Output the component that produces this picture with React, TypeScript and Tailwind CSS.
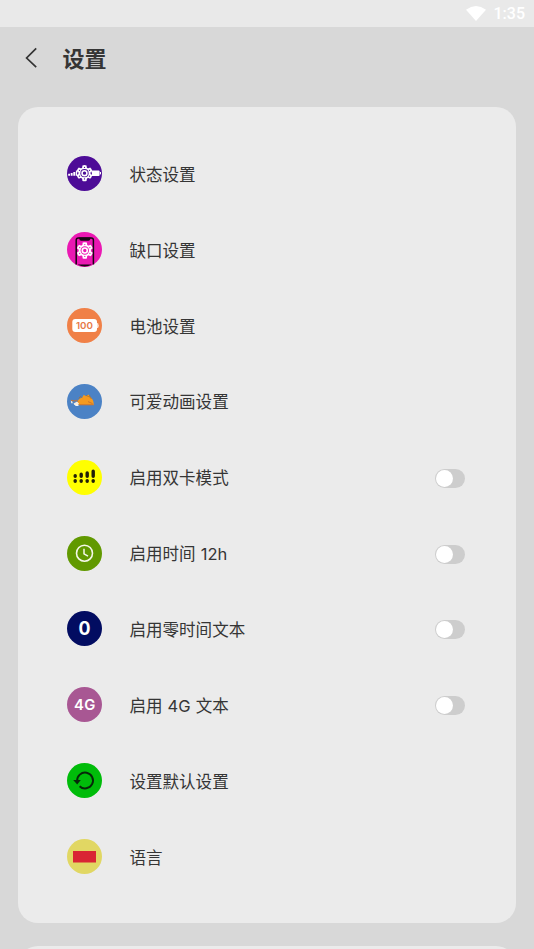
import type { ReactNode } from 'react';

type Item = { label: string; icon: ReactNode; toggle?: boolean };

function Gear({ cx, cy, size, bg }: { cx: number; cy: number; size: number; bg: string }) {
  return (
    <g transform={`translate(${cx} ${cy}) scale(${size})`}>
      {[0, 60, 120, 180, 240, 300].map((a) => (
        <path key={a} d="M-2.6-4-2.1-7.9Q0-8.6 2.1-7.9L2.6-4Z" fill="#fff" transform={`rotate(${a})`} />
      ))}
      <circle r="6.1" fill="#fff" />
      <circle r="4.2" fill={bg} />
      {[0, 60, 120, 180, 240, 300].map((a) => (
        <circle key={a} cy="-5.9" r="0.65" fill={bg} transform={`rotate(${a})`} />
      ))}
      <circle r="2.5" fill={bg} stroke="#fff" strokeWidth="1.6" />
    </g>
  );
}

function Disc({ color, children }: { color: string; children: ReactNode }) {
  return (
    <svg viewBox="0 0 35 35" className="size-[35px] shrink-0">
      <circle cx="17.5" cy="17.5" r="17.5" fill={color} />
      {children}
    </svg>
  );
}

const items: Item[] = [
  {
    label: '状态设置',
    icon: (
      <Disc color="#4d0c97">
        <path d="M1.2 17.8h1.8v2H1.2zM3.7 17h1.9v2.8H3.7zM6.3 16h2v3.8h-2zM8.9 14.6h2.5v5.2H8.9z" fill="#fff" />
        <rect x="22" y="14.4" width="10.6" height="5.6" rx="1" fill="#fff" />
        <path d="M33.5 16v2.4" stroke="#fff" />
        <circle cx="17.5" cy="17.2" r="7.4" fill="#4d0c97" />
        <Gear cx={17.5} cy={17.2} size={0.98} bg="#4d0c97" />
      </Disc>
    ),
  },
  {
    label: '缺口设置',
    icon: (
      <Disc color="#ea18b2">
        <path d="M9.2 32.6V8.2Q9.2 6 11.4 6h12.8q2.2 0 2.2 2.2v24.4" fill="none" stroke="#160712" strokeWidth="1.5" />
        <path d="M12.3 5.5h11v1.3q0 1.9-1.9 1.9h-7.2q-1.9 0-1.9-1.9zM10.5 32.5h14.4q-7.2 4-14.4 0z" fill="#160712" />
        <Gear cx={17.8} cy={18.5} size={1} bg="#ea18b2" />
      </Disc>
    ),
  },
  {
    label: '电池设置',
    icon: (
      <Disc color="#f08047">
        <rect x="5.3" y="11.1" width="24.7" height="12.8" rx="3" fill="#fff" />
        <path d="M30.6 15.2q1.5 2.4 0 4.8z" fill="#fff" stroke="#fff" strokeWidth=".6" />
        <text x="17.5" y="20.7" textAnchor="middle" textLength="17" lengthAdjust="spacingAndGlyphs" fill="#e77847" className="font-[Inter] text-[9px] font-semibold">100</text>
      </Disc>
    ),
  },
  {
    label: '可爱动画设置',
    icon: (
      <Disc color="#4b82c5">
        <path d="M9.5 20.8Q10.2 14.5 15.2 13.4l1.6-2.6 2.2 1.4 2.4-1.6 1.6 2.1q4 2.6 3.8 8.4z" fill="#f59a20" />
        <path d="m11.8 14.6 1.6-2.2 1.8 1.2M19 11.4l2.5 1.1 1.3-.8.2 2 1.7.8" fill="none" stroke="#a66f35" strokeWidth=".8" />
        <path d="M3.8 16.4 5.8 18l-.7 1.7-1-1zM6.5 19.4l3.7-2 1.8 2-1.5 1.8-3.1-.2z" fill="#f4ece0" />
        <path d="m4 16.2 3.6.9 2-.8 1.8 1.7M12.3 20.8h14.2M21 17.6l4.5 2" fill="none" stroke="#cc742e" />
        <path d="M8.3 21.3h3.2" stroke="#fff" strokeWidth="1.2" />
      </Disc>
    ),
  },
  {
    label: '启用双卡模式',
    toggle: true,
    icon: (
      <Disc color="#ffff00">
        <g stroke="#211f08" strokeWidth="3.4" strokeLinecap="round">
          <path d="M8.2 15.8v.5M14.2 14.3v1.9M20.2 13v3.2M26.2 11.2v5M8.2 20.6v.7M14.2 20.6v.7M20.2 20.6v.7M26.2 20.6v.7" />
        </g>
      </Disc>
    ),
  },
  {
    label: '启用时间 12h',
    toggle: true,
    icon: (
      <Disc color="#619900">
        <circle cx="17.5" cy="17.2" r="8" fill="none" stroke="#f5f8e9" strokeWidth="1.6" />
        <path d="M17 12.8v5l4 2.4" fill="none" stroke="#f5f8e9" strokeWidth="1.5" />
      </Disc>
    ),
  },
  {
    label: '启用零时间文本',
    toggle: true,
    icon: (
      <Disc color="#020c61">
        <text x="17.5" y="24.1" textAnchor="middle" textLength="12" lengthAdjust="spacingAndGlyphs" fill="#fff" className="font-[Inter] text-[18.5px] font-bold">0</text>
      </Disc>
    ),
  },
  {
    label: '启用 4G 文本',
    toggle: true,
    icon: (
      <Disc color="#a85793">
        <text x="17.7" y="22.7" textAnchor="middle" textLength="21.5" fill="#fff" className="font-[Inter] text-[14.8px] font-semibold">4G</text>
      </Disc>
    ),
  },
  {
    label: '设置默认设置',
    icon: (
      <Disc color="#00bc0a">
        <path d="M10.2 18.2A7.9 7.9 0 1 1 12.6 23.2" fill="none" stroke="#07280a" strokeWidth="2" />
        <path d="M6.2 17.1h7.6l-3.6 4.3z" fill="#07280a" />
      </Disc>
    ),
  },
  {
    label: '语言',
    icon: (
      <Disc color="#e1d763">
        <rect x="6" y="12" width="23" height="11.5" fill="#d92534" />
      </Disc>
    ),
  },
];

function StatusBar() {
  return (
    <div className="flex h-[27px] shrink-0 items-center justify-end bg-[#e9e9e9] pr-[9px] text-white">
      <svg viewBox="0 0 20 15" className="mr-2 h-[15px] w-5">
        <path d="M0 3.7Q10-3.7 20 3.7L10 15z" fill="currentColor" />
      </svg>
      <span className="pt-px font-[Roboto] text-[16px] leading-none font-medium">1:35</span>
    </div>
  );
}

export default function App() {
  return (
    <div className="flex h-[949px] w-[534px] flex-col overflow-hidden bg-[#d8d8d8] font-[Inter,'Noto_Sans_CJK_SC',sans-serif] text-[#353535]">
      <StatusBar />
      <header className="flex h-20 shrink-0 items-start pt-[19px] pl-[25px]">
        <svg viewBox="0 0 12 22" className="h-[22px] w-3">
          <path d="M11.2 2.3 1.6 12 11.2 21.2" fill="none" stroke="#333" strokeWidth="1.7" />
        </svg>
        <h1 className="ml-[25.5px] pt-px text-[22px] leading-6 font-bold">设置</h1>
      </header>
      <main className="mx-[18px] flex h-[816px] shrink-0 flex-col rounded-[20px] bg-[#ebebeb] pt-[28.6px] pr-[51.5px] pl-[49px]">
        {items.map((item) => (
          <div key={item.label} className="flex h-[75.92px] items-center">
            {item.icon}
            <span className="ml-[27.5px] flex-1 pt-[2.4px] text-[16.55px] leading-6 [word-spacing:0.4px]">{item.label}</span>
            {item.toggle && (
              <button role="switch" aria-checked={false} aria-label={item.label} className="mt-[2px] flex h-[19px] w-[30px] items-center rounded-full bg-[#cdcdcd] pl-px">
                <span className="size-[17px] rounded-full bg-white" />
              </button>
            )}
          </div>
        ))}
      </main>
      <section className="mx-[18px] mt-[23px] h-20 shrink-0 rounded-[20px] bg-[#ebebeb]" />
    </div>
  );
}
